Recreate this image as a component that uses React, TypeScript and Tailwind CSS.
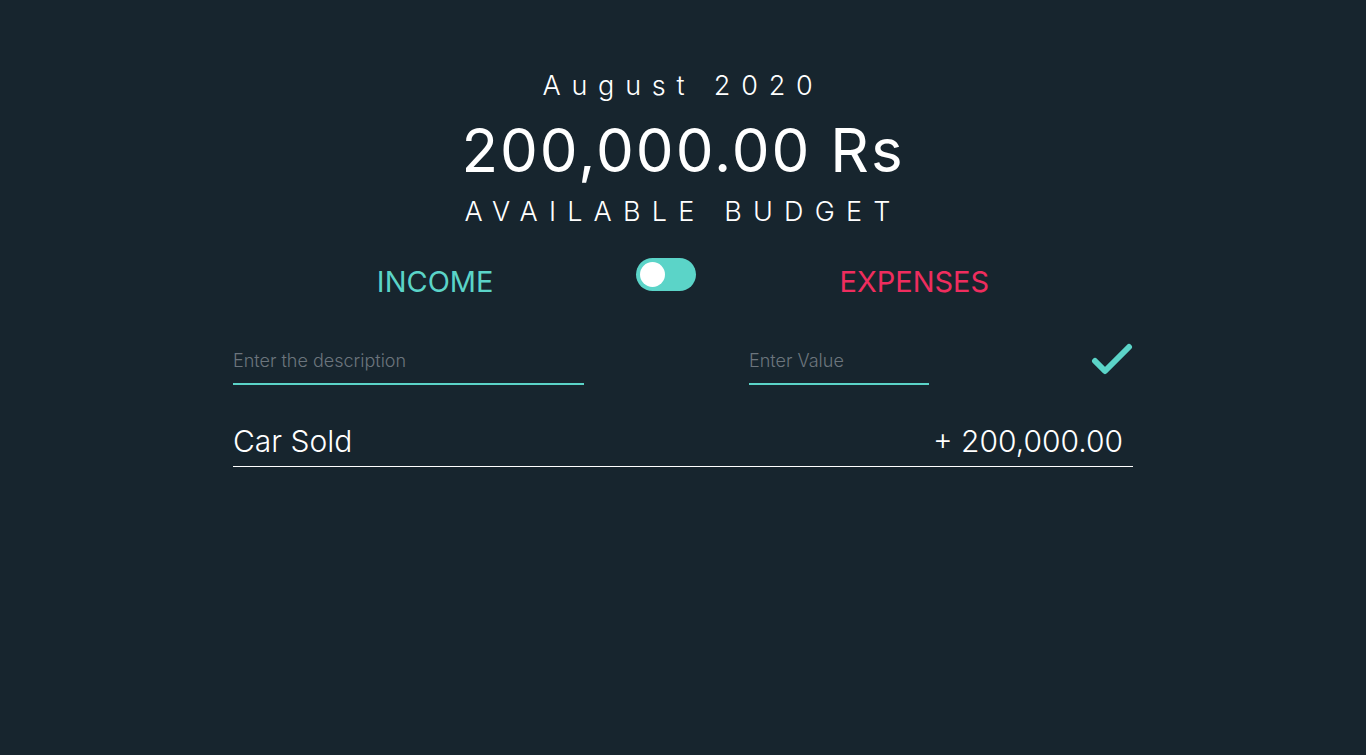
import { useState } from "react";

// budget screen: header summary, income/expense toggle, entry form and list
export default function App() {
  const [isExpense, setIsExpense] = useState<boolean>(false);

  return (
    <div
      className="flex min-h-[755px] w-full flex-col items-center bg-[#17252e] text-white"
      style={{ fontFamily: "Inter, 'Noto Sans', sans-serif" }}
    >
      {/* budget summary */}
      <div className="mt-[66px] flex flex-col items-center">
        <p className="text-[27px] leading-[40px] font-light tracking-[10.8px]">
          August 2020
        </p>
        <p className="mt-[8px] text-[60px] leading-[72px] font-normal tracking-[2px]">
          200,000.00 Rs
        </p>
        <p className="mt-[6px] text-[27px] leading-[40px] font-light tracking-[11.2px]">
          AVAILABLE BUDGET
        </p>
      </div>

      {/* income / expenses switch */}
      <div className="mt-[26px] flex items-start justify-center gap-[143px]">
        <span className="mt-[6px] text-[29px] leading-[36px] text-[#5bd4c8]">
          INCOME
        </span>
        <button
          onClick={() => setIsExpense(!isExpense)}
          className="relative h-[33px] w-[60px] rounded-full bg-[#5bd4c8]"
        >
          <span
            className={
              isExpense
                ? "absolute right-[4px] top-[4px] h-[25px] w-[25px] rounded-full bg-white"
                : "absolute left-[4px] top-[4px] h-[25px] w-[25px] rounded-full bg-white"
            }
          />
        </button>
        <span className="mt-[6px] text-[29px] leading-[36px] text-[#ef2d5e]">
          EXPENSES
        </span>
      </div>

      {/* entry form */}
      <div className="mt-[39px] flex w-[900px] items-start">
        <input
          placeholder="Enter the description"
          className="h-[46px] w-[351px] border-b-2 border-[#5bd4c8] bg-transparent pb-[2px] text-[18px] font-light text-white outline-none placeholder:text-[#6c757d]"
        />
        <input
          placeholder="Enter Value"
          className="ml-[165px] h-[46px] w-[180px] border-b-2 border-[#5bd4c8] bg-transparent pb-[2px] text-[18px] font-light text-white outline-none placeholder:text-[#6c757d]"
        />
        <button className="ml-auto mt-[4px]">
          <svg width="42" height="34" viewBox="0 0 42 34">
            <polyline
              points="4,18 14,28 38,4"
              fill="none"
              stroke="#5bd4c8"
              strokeWidth="6"
              strokeLinecap="round"
              strokeLinejoin="round"
            />
          </svg>
        </button>
      </div>

      {/* list of entries */}
      <div className="mt-[35px] flex w-[900px] items-center justify-between border-b border-white pb-[4px]">
        <span className="text-[30px] leading-[42px] font-light">Car Sold</span>
        <span className="pr-[10px] text-[30px] leading-[42px] font-light">
          + 200,000.00
        </span>
      </div>
    </div>
  );
}
